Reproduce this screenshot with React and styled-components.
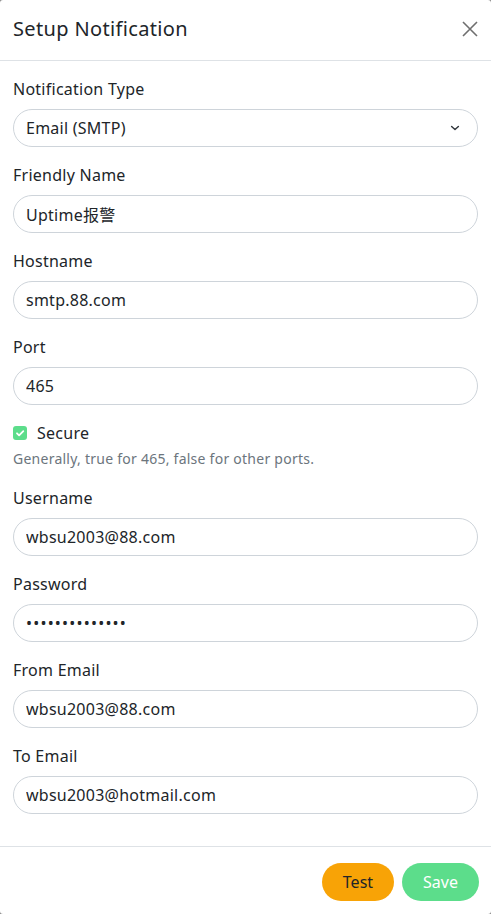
import React from "react";
import styled, { createGlobalStyle } from "styled-components";

const Global = createGlobalStyle`
  html, body { margin: 0; padding: 0; background: #8a8a8a; }
  body { font-family: "Segoe UI", "Noto Sans", "Noto Sans CJK SC", sans-serif; color: #212529; letter-spacing: 0.25px; }
  * { box-sizing: border-box; }
`;

const Modal = styled.div`
  width: 491px;
  height: 914px;
  background: #fff;
  border-radius: 3px;
  overflow: hidden;
  display: flex;
  flex-direction: column;
`;

const Header = styled.div`
  display: flex;
  align-items: center;
  justify-content: space-between;
  padding: 14px 13px 16px 13px;
  border-bottom: 1px solid #dee2e6;
`;

const Title = styled.h5`
  margin: 0;
  font-size: 20px;
  font-weight: 400;
  line-height: 30px;
  letter-spacing: 0.35px;
`;

const Close = styled.button`
  border: 0;
  background: transparent;
  padding: 0;
  width: 16px;
  height: 16px;
  display: flex;
  cursor: pointer;
`;

const Body = styled.div`
  padding: 16px 13px 32px;
  display: flex;
  flex-direction: column;
  gap: 16px;
`;

const Group = styled.div`
  display: flex;
  flex-direction: column;
`;

const Label = styled.label`
  font-size: 16px;
  line-height: 24px;
  margin-bottom: 8px;
`;

const Input = styled.input`
  height: 38px;
  width: 100%;
  border: 1px solid #ced4da;
  border-radius: 19px;
  padding: 0 12px;
  font: inherit;
  font-size: 16px;
  color: #212529;
  background: #fff;
  outline: none;
  letter-spacing: ${(p) => (p.type === "password" ? "1.2px" : "0.25px")};
`;

const SelectBox = styled.div`
  height: 38px;
  border: 1px solid #ced4da;
  border-radius: 19px;
  padding: 0 12px;
  font-size: 16px;
  display: flex;
  align-items: center;
  justify-content: space-between;
`;

const CheckGroup = styled.div`
  display: flex;
  flex-direction: column;
`;

const CheckRow = styled.div`
  display: flex;
  align-items: center;
  gap: 10px;
  height: 24px;
`;

const Check = styled.span`
  width: 14px;
  height: 14px;
  border-radius: 3px;
  background: #5cdd8b;
  display: flex;
  align-items: center;
  justify-content: center;
`;

const CheckLabel = styled.span`
  font-size: 16px;
`;

const Help = styled.div`
  font-size: 14px;
  line-height: 21px;
  color: #6c757d;
  margin-top: 3px;
  margin-bottom: 1px;
`;

const Footer = styled.div`
  border-top: 1px solid #dee2e6;
  padding: 16px 12px;
  display: flex;
  justify-content: flex-end;
  gap: 8px;
`;

const Button = styled.button`
  height: 38px;
  border: 0;
  border-radius: 19px;
  padding: 0 ${(p) => p.$px}px;
  font: inherit;
  font-size: 16px;
  background: ${(p) => p.$bg};
  color: ${(p) => p.$fg};
`;

const fields = [
  ["Friendly Name", "text", "Uptime报警"],
  ["Hostname", "text", "smtp.88.com"],
  ["Port", "text", "465"],
];
const fields2 = [
  ["Username", "text", "wbsu2003@88.com"],
  ["Password", "password", "12345678901234"],
  ["From Email", "text", "wbsu2003@88.com"],
  ["To Email", "text", "wbsu2003@hotmail.com"],
];

function Field({ label, type, value }) {
  return (
    <Group>
      <Label>{label}</Label>
      <Input type={type} value={value} readOnly />
    </Group>
  );
}

export default function App() {
  return (
    <>
      <Global />
      <Modal>
        <Header>
          <Title>Setup Notification</Title>
          <Close aria-label="close">
            <svg width="16" height="16" viewBox="0 0 16 16">
              <path d="M1 1L15 15M15 1L1 15" stroke="#6f6f6f" strokeWidth="1.6" />
            </svg>
          </Close>
        </Header>
        <Body>
          <Group>
            <Label>Notification Type</Label>
            <SelectBox>
              <span>Email (SMTP)</span>
              <svg width="16" height="12" viewBox="0 0 16 16" style={{ marginRight: 2 }}>
                <path d="M3.5 6l4.5 4 4.5-4" fill="none" stroke="#343a40" strokeWidth="2" strokeLinecap="round" strokeLinejoin="round" />
              </svg>
            </SelectBox>
          </Group>
          {fields.map(([l, t, v]) => (
            <Field key={l} label={l} type={t} value={v} />
          ))}
          <CheckGroup>
            <CheckRow>
              <Check>
                <svg width="12" height="12" viewBox="0 0 20 20">
                  <path d="M5 10.5l3.5 3.5 7-7" fill="none" stroke="#fff" strokeWidth="3" strokeLinecap="round" strokeLinejoin="round" />
                </svg>
              </Check>
              <CheckLabel>Secure</CheckLabel>
            </CheckRow>
            <Help>Generally, true for 465, false for other ports.</Help>
          </CheckGroup>
          {fields2.map(([l, t, v]) => (
            <Field key={l} label={l} type={t} value={v} />
          ))}
        </Body>
        <Footer>
          <Button $bg="#f8a306" $fg="#212529" $px={21}>Test</Button>
          <Button $bg="#5cdd8b" $fg="#fff" $px={21}>Save</Button>
        </Footer>
      </Modal>
    </>
  );
}
